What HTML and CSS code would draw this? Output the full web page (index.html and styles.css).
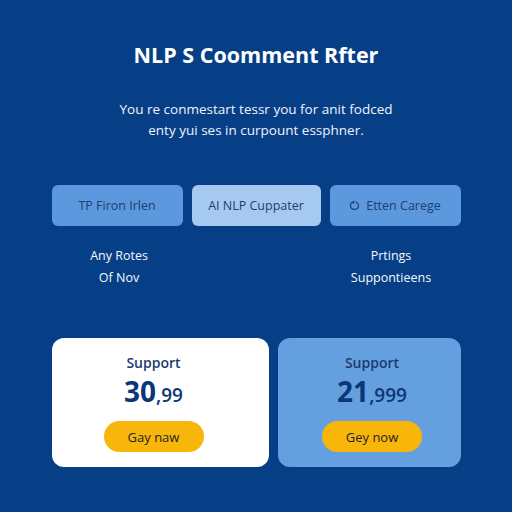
FILE: index.html
```html
<!DOCTYPE html>
<html lang="en">
<head>
    <meta charset="UTF-8">
    <meta name="viewport" content="width=device-width, initial-scale=1.0">
    <title>NLP S Coomment Rfter</title>
    <link rel="stylesheet" href="styles.css">
</head>
<body>
    <div class="page">
        <h1 class="app-title">NLP S Coomment Rfter</h1>

        <p class="intro">
            You re conmestart tessr you for anit fodced<br>
            enty yui ses in curpount essphner.
        </p>

        <div class="tabs">
            <button class="tab">TP Firon Irlen</button>
            <button class="tab active">AI NLP Cuppater</button>
            <button class="tab">
                <svg class="tab-icon" viewBox="0 0 12 12" width="11" height="11">
                    <path d="M4 2.2 C2.2 3 1.4 4.6 1.6 6.4 C1.9 8.7 3.8 10.3 6 10.3 C8.3 10.3 10.2 8.5 10.3 6.2 C10.4 4.4 9.4 2.9 7.8 2.1 M4 2.2 L5.8 1.4 M4 2.2 L5 3.8" fill="none" stroke="#1d3f70" stroke-width="1.3" stroke-linecap="round"/>
                </svg>
                Etten Carege
            </button>
        </div>

        <div class="notes">
            <div class="note">Any Rotes<br>Of Nov</div>
            <div></div>
            <div class="note">Prtings<br>Suppontieens</div>
        </div>

        <div class="plans">
            <div class="plan plan-light">
                <div class="plan-name">Support</div>
                <div class="plan-price">30<span class="cents">,99</span></div>
                <button class="buy-btn">Gay naw</button>
            </div>
            <div class="plan plan-blue">
                <div class="plan-name">Support</div>
                <div class="plan-price">21<span class="cents">,999</span></div>
                <button class="buy-btn">Gey now</button>
            </div>
        </div>
    </div>
</body>
</html>
```

FILE: styles.css
```css
body {
    margin: 0;
    background-color: #073f87;
    font-family: "Open Sans", "Liberation Sans", Arial, sans-serif;
    color: #fff;
}

.page {
    width: 512px;
    height: 512px;
    display: flex;
    flex-direction: column;
    align-items: center;
}

.app-title {
    margin: 40px 0 0;
    font-size: 21.5px;
    line-height: 30px;
    font-weight: 700;
}

.intro {
    margin: 29px 0 0;
    font-size: 13.5px;
    line-height: 21px;
    text-align: center;
    color: #eef3fb;
}

.tabs {
    margin-top: 44px;
    display: grid;
    grid-template-columns: 131px 129px 131px;
    gap: 9px;
}

.tab {
    height: 41px;
    border: none;
    border-radius: 6px;
    background-color: #5b98dd;
    color: #1d3f70;
    font-family: inherit;
    font-size: 12.5px;
    display: flex;
    justify-content: center;
    align-items: center;
    gap: 6px;
    padding: 0;
}

.tab.active {
    background-color: #a6c9f1;
}

.tab-icon {
    display: block;
}

.notes {
    margin-top: 19px;
    display: grid;
    grid-template-columns: 131px 129px 131px;
    gap: 9px;
    font-size: 12.5px;
    line-height: 22px;
    text-align: center;
    color: #f6f9fd;
}

.note {
    padding-left: 4px;
}

.notes .note:last-child {
    padding-left: 0;
    margin-left: -8px;
}

.plans {
    margin-top: 49px;
    display: grid;
    grid-template-columns: 217px 183px;
    gap: 9px;
}

.plan {
    height: 129px;
    border-radius: 12px;
    display: flex;
    flex-direction: column;
    align-items: center;
    box-sizing: border-box;
    padding-top: 14px;
}

.plan-light {
    background-color: #fff;
    padding-right: 13px;
}

.plan-blue {
    background-color: #64a0e0;
    padding-left: 6px;
}

.plan-name {
    font-size: 14px;
    font-weight: 600;
    line-height: 22px;
    color: #1b3b6e;
}

.plan-price {
    margin-top: 1px;
    font-size: 28px;
    font-weight: 700;
    line-height: 32px;
    color: #0c3777;
}

.plan-price .cents {
    font-size: 19px;
    font-weight: 600;
}

.buy-btn {
    margin-top: 10px;
    width: 100px;
    height: 31px;
    border: none;
    border-radius: 16px;
    background-color: #f8b60a;
    color: #1a1f2b;
    font-family: inherit;
    font-size: 13px;
    font-weight: 500;
    padding: 0;
}
```
